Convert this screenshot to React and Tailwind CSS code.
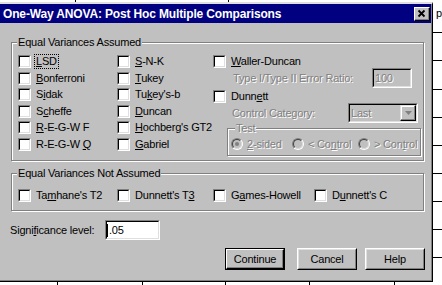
const U = ({ children }) => <span className="underline">{children}</span>

const dim = 'text-[#808080] [text-shadow:1px_1px_0_#fff]'

function Box() {
  return (
    <div className="h-[13px] w-[13px] shrink-0 border border-b-white border-l-[#808080] border-r-white border-t-[#808080]">
      <div className="h-full w-full border border-b-[#dfdfdf] border-l-black border-r-[#dfdfdf] border-t-black bg-white" />
    </div>
  )
}

function Check({ children, focus }) {
  return (
    <div className="flex h-[13px] items-center">
      <Box />
      {focus ? (
        <span className="ml-[4px] whitespace-nowrap px-[1px] leading-[13px] outline-1 outline-dotted outline-black">{children}</span>
      ) : (
        <span className="ml-[5px] whitespace-nowrap leading-[13px]">{children}</span>
      )}
    </div>
  )
}

function Radio({ checked }) {
  return (
    <div className="h-[12px] w-[12px] shrink-0 rounded-full border border-b-white border-l-[#808080] border-r-white border-t-[#808080]">
      <div className="flex h-full w-full items-center justify-center rounded-full border border-b-[#dfdfdf] border-l-[#404040] border-r-[#dfdfdf] border-t-[#404040] bg-[#c0c0c0]">
        {checked && <div className="h-[4px] w-[4px] rounded-full bg-[#808080]" />}
      </div>
    </div>
  )
}

function Sunken({ className, inner, children }) {
  return (
    <div className={`border border-b-white border-l-[#808080] border-r-white border-t-[#808080] ${className}`}>
      <div className={`flex h-full w-full items-center border border-b-[#dfdfdf] border-l-black border-r-[#dfdfdf] border-t-black ${inner}`}>
        {children}
      </div>
    </div>
  )
}

function Group({ label, className, children }) {
  return (
    <div className={`relative border border-[#808080] shadow-[1px_1px_0_#fff,inset_1px_1px_0_#fff] ${className}`}>
      <span className="absolute -top-[7px] left-[5px] whitespace-nowrap bg-[#c0c0c0] px-[1px] leading-[13px]">{label}</span>
      {children}
    </div>
  )
}

function Button({ children, isDefault }) {
  if (isDefault) {
    return (
      <div className="h-[22px] w-[60px] border border-black">
        <div className="flex h-full w-full items-center justify-center border border-b-black border-l-white border-r-black border-t-white shadow-[inset_-1px_-1px_0_#808080]">
          {children}
        </div>
      </div>
    )
  }
  return (
    <div className="h-[22px] w-[60px] border border-b-black border-l-white border-r-black border-t-white">
      <div className="flex h-full w-full items-center justify-center border border-b-[#808080] border-l-[#dfdfdf] border-r-[#808080] border-t-[#dfdfdf]">
        {children}
      </div>
    </div>
  )
}

const sheetRows = [33, 28, 29, 28, 28, 28, 28, 28, 28]
const bottomTicks = [57, 84, 82, 83, 84]

export default function App() {
  return (
    <div className="flex h-[285px] w-[442px] flex-col overflow-hidden bg-white font-['Liberation_Sans',Arial,sans-serif] text-[11px] tracking-[-0.2px] text-black">
      <div className="flex h-[282px]">
        <div className="flex w-[434px] flex-col">
          <div className="flex h-[2px] shrink-0 bg-white">
            <div className="ml-[75px] w-px bg-black" />
            <div className="ml-[152px] w-px bg-black" />
          </div>

          <div className="flex flex-1 flex-col border-b border-r border-t-2 border-b-black border-r-black border-t-[#dfdfdf] bg-[#c0c0c0] shadow-[inset_-1px_-1px_0_#808080]">
            {/* title bar */}
            <div className="mr-[1px] flex h-[19px] shrink-0 bg-[#000080]">
              <span className="block pl-[3px] pt-[4px] text-[12px] font-bold leading-[13px] tracking-[-0.15px] text-white">
                One-Way ANOVA: Post Hoc Multiple Comparisons
              </span>
              <div className="ml-auto mr-[1px] mt-[3px] h-[14px] w-[16px] border border-b-black border-l-white border-r-black border-t-white bg-[#c0c0c0] shadow-[inset_-1px_-1px_0_#808080]">
                <svg width="14" height="12" viewBox="0 0 14 12" className="block">
                  <path d="M3.5 2.5 L9.5 8.5 M9.5 2.5 L3.5 8.5" stroke="#000" strokeWidth="1.8" />
                </svg>
              </div>
            </div>

            {/* equal variances assumed */}
            <Group label="Equal Variances Assumed" className="ml-[11px] mt-[19px] h-[119px] w-[413px] shrink-0">
              <div className="grid grid-cols-[99px_96px_1fr] pl-[6px] pt-[12px]">
                <div className="flex flex-col gap-[3.6px]">
                  <Check focus><U>L</U>SD</Check>
                  <Check><U>B</U>onferroni</Check>
                  <Check>S<U>i</U>dak</Check>
                  <Check>S<U>c</U>heffe</Check>
                  <Check><U>R</U>-E-G-W F</Check>
                  <Check>R-E-G-W <U>Q</U></Check>
                </div>
                <div className="flex flex-col gap-[3.6px]">
                  <Check><U>S</U>-N-K</Check>
                  <Check><U>T</U>ukey</Check>
                  <Check>Tu<U>k</U>ey's-b</Check>
                  <Check><U>D</U>uncan</Check>
                  <Check><U>H</U>ochberg's GT2</Check>
                  <Check><U>G</U>abriel</Check>
                </div>
                <div className="flex flex-col">
                  <Check><U>W</U>aller-Duncan</Check>
                  <div className="flex h-[20px] items-center pl-[20px]">
                    <span className={`w-[139px] whitespace-nowrap ${dim}`}>Type I/Type II Error Ratio:</span>
                    <Sunken className="h-[20px] w-[40px]" inner="pl-[1px]">
                      <span className={dim}>100</span>
                    </Sunken>
                  </div>
                  <div className="mt-[2px]">
                    <Check>Dunn<U>e</U>tt</Check>
                  </div>
                  <div className="flex h-[20px] items-center pl-[19px]">
                    <span className={`w-[116px] whitespace-nowrap ${dim}`}>Control Category:</span>
                    <Sunken className="h-[20px] w-[70px]" inner="pl-[1px]">
                      <span className={dim}>Last</span>
                      <div className="ml-auto flex h-[16px] w-[16px] items-center justify-center border border-b-black border-l-[#dfdfdf] border-r-black border-t-[#dfdfdf] bg-[#c0c0c0] shadow-[inset_-1px_-1px_0_#808080,inset_1px_1px_0_#fff]">
                        <svg width="7" height="4" viewBox="0 0 7 4" className="block">
                          <polygon points="0,0 7,0 3.5,4" fill="#808080" />
                        </svg>
                      </div>
                    </Sunken>
                  </div>
                  <div className="relative ml-[14px] mt-[5px] h-[28px] w-[194px] border border-[#808080] shadow-[1px_1px_0_#fff,inset_1px_1px_0_#fff]">
                    <span className={`absolute -top-[7px] left-[7px] bg-[#c0c0c0] px-[1px] leading-[13px] ${dim}`}>Test</span>
                    <div className="flex pl-[3px] pt-[9px]">
                      <div className="flex w-[61px] items-center">
                        <Radio checked />
                        <span className={`ml-[4px] whitespace-nowrap leading-[12px] ${dim}`}><U>2</U>-sided</span>
                      </div>
                      <div className="flex w-[66px] items-center">
                        <Radio />
                        <span className={`ml-[4px] whitespace-nowrap leading-[12px] ${dim}`}>&lt; Co<U>n</U>trol</span>
                      </div>
                      <div className="flex items-center">
                        <Radio />
                        <span className={`ml-[4px] whitespace-nowrap leading-[12px] ${dim}`}>&gt; Con<U>t</U>rol</span>
                      </div>
                    </div>
                  </div>
                </div>
              </div>
            </Group>

            {/* equal variances not assumed */}
            <Group label="Equal Variances Not Assumed" className="ml-[11px] mt-[12px] h-[38px] w-[413px] shrink-0">
              <div className="grid grid-cols-[99px_96px_101px_1fr] pl-[6px] pt-[15px]">
                <Check>Ta<U>m</U>hane's T2</Check>
                <Check>Dunnett's T<U>3</U></Check>
                <Check>G<U>a</U>mes-Howell</Check>
                <Check>D<U>u</U>nnett's C</Check>
              </div>
            </Group>

            {/* significance */}
            <div className="ml-[10px] mt-[9px] flex h-[20px] shrink-0 items-center">
              <span className="w-[95px] whitespace-nowrap">Signi<U>f</U>icance level:</span>
              <Sunken className="h-[20px] w-[55px]" inner="bg-white">
                <div className="h-[13px] w-px bg-black" />
                <span className="ml-[1px]">.05</span>
              </Sunken>
            </div>

            {/* buttons */}
            <div className="ml-[225px] mt-[8px] flex shrink-0">
              <Button isDefault>Continue</Button>
              <div className="ml-[12px]">
                <Button>Cancel</Button>
              </div>
              <div className="ml-[8px]">
                <Button>Help</Button>
              </div>
            </div>
          </div>
        </div>

        {/* sheet to the right of the dialog */}
        <div className="flex flex-1 flex-col">
          {sheetRows.map((h, i) => (
            <div key={i} className="shrink-0 border-b border-black" style={{ height: h }}>
              {i === 0 && <span className="block pl-[3px] pt-[8px] leading-[11px]">p</span>}
            </div>
          ))}
        </div>
      </div>

      {/* sheet below the dialog */}
      <div className="flex h-[3px] shrink-0">
        {bottomTicks.map((m, i) => (
          <div key={i} className="w-px bg-black" style={{ marginLeft: m }} />
        ))}
      </div>
    </div>
  )
}
